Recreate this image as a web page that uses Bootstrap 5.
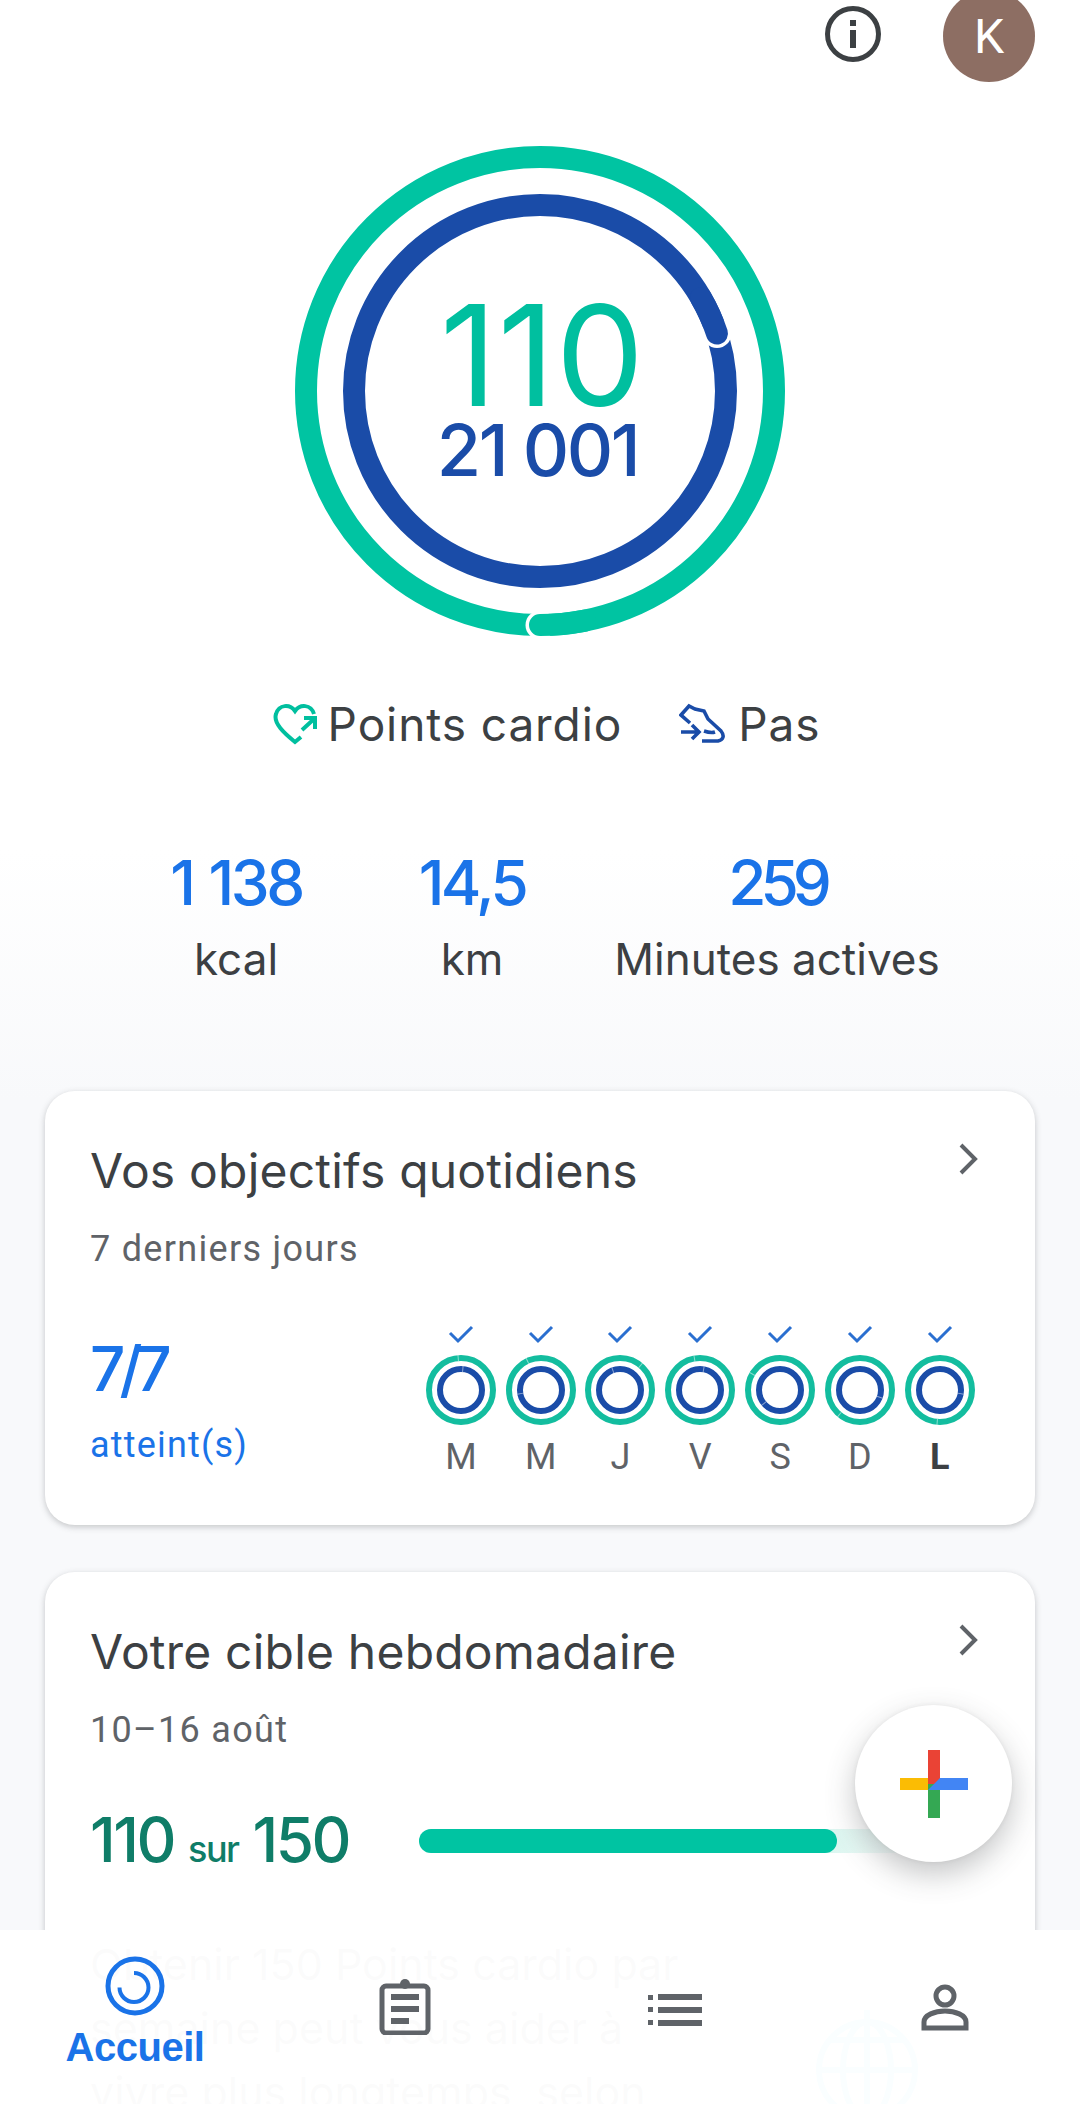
<!doctype html>
<html lang="fr">
<head>
<meta charset="utf-8" />
<meta name="viewport" content="width=device-width, initial-scale=1" />
<title>Fit</title>
<link href="https://cdn.jsdelivr.net/npm/bootstrap@5.3.6/dist/css/bootstrap.min.css" rel="stylesheet" crossorigin="anonymous" />
<style>
    html, body { height: 100%; }
    body {
        width: 1080px; height: 2104px; overflow: hidden; position: relative;
        font-family: Inter, sans-serif; color: #3c4043;
        background: linear-gradient(#fff 0, #fff 850px, #f8f9fb 1100px);
    }
    .top-bar { height: 82px; padding-right: 45px; gap: 62px; }
    .info-icon { margin-top: 6px; }
    .avatar { width: 92px; height: 92px; margin-top: -10px; background: #8d6e63; color: #fff; font: 400 48px Roboto, sans-serif; }
    .ring-box { width: 490px; height: 490px; margin: 64px auto 0; padding-top: 154px; }
    .ring-box svg { position: absolute; inset: 0; }
    .ring-num { position: relative; text-align: center; }
    .ring-main { font: 400 140px/110px Inter, sans-serif; letter-spacing: 1px; padding-left: 5px; color: #00bf9f; height: 110px; }
    .ring-sub { font: 500 72px/1 Inter, sans-serif; letter-spacing: -2.5px; padding-right: 5px; color: #1a4ca8; margin-top: 4px; }
    .legend { margin-top: 58px; margin-left: 13px; font-size: 46px; letter-spacing: .9px; line-height: 60px; gap: 57px; }
    .legend-item { gap: 11px; }
    .stats-row { margin-top: 97px; margin-left: 136px; }
    .stat-num { font: 500 62px/64px Inter, sans-serif; letter-spacing: -3.5px; word-spacing: 3px; color: #1a73e8; }
    .stat-txt { font-size: 44px; line-height: 60px; color: #3c4043; margin-top: 14px; }
    .s1, .s2 { width: 200px; }
    .s2 { margin-left: 36px; }
    .s3 { width: 360px; margin-left: 25px; }
    .s3 .stat-num { letter-spacing: -6px; }
    .fit-card { width: 990px; margin: 0 45px; background: #fff; border-radius: 30px; padding: 50px 45px 0; box-shadow: 0 2px 6px rgba(60,64,67,.28); position: relative; }
    .c1 { margin-top: 102px; height: 434px; }
    .c2 { margin-top: 47px; height: 532px; border-radius: 30px 30px 0 0; }
    .card-title-txt { font-size: 48px; line-height: 60px; letter-spacing: .2px; color: #3c4043; }
    .card-sub { font: 400 36px/44px Roboto, sans-serif; letter-spacing: 1.3px; color: #5f6368; margin-top: 26px; }
    .chev { position: absolute; right: 54px; top: 50px; }
    .goal-num { font: 500 62px/70px Inter, sans-serif; letter-spacing: -6px; color: #1a73e8; margin-top: 63px; }
    .goal-txt { font: 400 36px/44px Roboto, sans-serif; letter-spacing: 1.2px; color: #1a73e8; margin-top: 19px; }
    .days { position: absolute; left: 376px; top: 234px; }
    .day { width: 79.8px; text-align: center; }
    .day-ring { margin-top: 10px; }
    .day-name { font: 400 36px/40px Roboto, sans-serif; color: #5f6368; margin-top: 12px; }
    .day-now { font-weight: 700; color: #3c4043; }
    .target-line { margin-top: 53px; }
    .target-num { width: 329px; font: 500 62px/70px Inter, sans-serif; letter-spacing: -2.5px; color: #0f7d68; white-space: nowrap; }
    .target-num span { font-size: 36px; letter-spacing: -1.5px; }
    .bar-track { width: 500px; height: 24px; margin-top: -8px; border-radius: 12px; background: linear-gradient(90deg, #d6f5ee 0, #d6f5ee 400px, #fff 100%); }
    .bar-fill { width: 418px; height: 24px; border-radius: 12px; background: #00c4a2; }
    .card-desc { font-size: 43px; line-height: 64px; margin-top: 48px; width: 640px; }
    .who-logo { position: absolute; left: 757px; top: 438px; }
    .fab { position: absolute; left: 855px; top: 1705px; width: 157px; height: 157px; background: #fff; box-shadow: 0 12px 30px rgba(60,64,67,.3), 0 0 4px rgba(60,64,67,.08); z-index: 5; }
    .fab:hover { background: #fff; }
    .bottom-nav { position: absolute; left: 0; right: 0; top: 1930px; bottom: 0; background: rgba(255,255,255,.98); z-index: 4; }
    .nav-slot { flex: 0 0 270px; text-align: center; }
    .nav-home { padding-top: 26px; }
    .nav-plan { padding-top: 47px; }
    .nav-list { padding-top: 64px; }
    .nav-me { padding-top: 54px; }
    .nav-label { font: 700 40px/44px "Liberation Sans", sans-serif; color: #1a73e8; letter-spacing: -.5px; margin-top: 9px; }
</style>
</head>
<body>

<div class="top-bar d-flex justify-content-end align-items-start">
    <svg class="info-icon" width="56" height="56" viewBox="0 0 56 56"><circle cx="28" cy="28" r="25.5" fill="none" stroke="#3c4043" stroke-width="5"/><rect x="25" y="24" width="6" height="18" fill="#3c4043"/><rect x="25" y="14" width="6" height="6" fill="#3c4043"/></svg>
    <div class="avatar rounded-circle d-flex align-items-center justify-content-center">K</div>
</div>

<div class="ring-box position-relative">
    <svg width="490" height="490" viewBox="0 0 490 490" fill="none">
        <circle cx="245" cy="245" r="234" stroke="#00c4a2" stroke-width="22"/>
        <circle cx="245" cy="245" r="186" stroke="#1a4ca8" stroke-width="22"/>
        <!-- overlap of the ring ends -->
        <circle cx="245" cy="479" r="14.5" fill="#fff"/>
        <path d="M245 479A234 234 0 0 0 290 474.6" stroke="#00c4a2" stroke-width="22" stroke-linecap="round"/>
        <circle cx="422" cy="187.5" r="14.5" fill="#fff"/>
        <path d="M422 187.5A186 186 0 0 0 406 152" stroke="#1a4ca8" stroke-width="22" stroke-linecap="round"/>
    </svg>
    <div class="ring-num ring-main">110</div>
    <div class="ring-num ring-sub">21 001</div>
</div>

<div class="legend d-flex justify-content-center align-items-center">
    <div class="legend-item d-flex align-items-center">
        <svg width="44" height="42" viewBox="0 0 44 42" fill="none" stroke="#00bf9f" stroke-width="4"><path d="M41 11C38 1 27 1 22 8C17 1 6 1 3 11C0 20 11 30 22 39L28 34"/><path d="M29 27L41 16M31 15H42V26"/></svg>
        <span>Points cardio</span>
    </div>
    <div class="legend-item d-flex align-items-center">
        <svg width="48" height="42" viewBox="0 0 48 42" fill="none" stroke="#1a4ca8" stroke-width="3.6"><path d="M11 20L2 12L10 3L16 6L25 8L29 16L42 28C46 33 44 37 39 38H23"/><path d="M25 28C28 29 33 30 36 29"/><path d="M2 29H20M13 22L20 29L13 36"/></svg>
        <span>Pas</span>
    </div>
</div>

<div class="stats-row d-flex text-center">
    <div class="s1"><div class="stat-num">1 138</div><div class="stat-txt">kcal</div></div>
    <div class="s2"><div class="stat-num">14,5</div><div class="stat-txt">km</div></div>
    <div class="s3"><div class="stat-num">259</div><div class="stat-txt text-nowrap">Minutes actives</div></div>
</div>

<div class="fit-card c1">
    <div class="card-title-txt">Vos objectifs quotidiens</div>
    <div class="card-sub">7 derniers jours</div>
    <svg class="chev" width="24" height="36" viewBox="0 0 24 36" fill="none" stroke="#5f6368" stroke-width="4"><path d="M4 4L18 18L4 32"/></svg>
    <div class="goal-num">7/7</div>
    <div class="goal-txt">atteint(s)</div>
    <div class="days d-flex" id="days"></div>
</div>

<div class="fit-card c2">
    <div class="card-title-txt">Votre cible hebdomadaire</div>
    <div class="card-sub">10–16 août</div>
    <svg class="chev" width="24" height="36" viewBox="0 0 24 36" fill="none" stroke="#5f6368" stroke-width="4"><path d="M4 4L18 18L4 32"/></svg>
    <div class="target-line d-flex align-items-center">
        <div class="target-num">110 <span>sur</span> 150</div>
        <div class="bar-track"><div class="bar-fill"></div></div>
    </div>
    <div class="card-desc">Obtenir 150 Points cardio par semaine peut vous aider à vivre plus longtemps, selon</div>
    <svg class="who-logo" width="130" height="94" viewBox="0 0 130 94" fill="none" stroke="#00b4f0" stroke-width="6"><circle cx="65" cy="60" r="48"/><ellipse cx="65" cy="60" rx="24" ry="48"/><path d="M65 0V94M17 60H113M28 30H102"/></svg>
</div>

<button class="fab btn rounded-circle border-0 p-0 d-flex align-items-center justify-content-center" type="button">
    <svg width="68" height="68" viewBox="0 0 68 68">
        <rect x="0" y="28" width="34" height="12" fill="#fbbc04"/>
        <rect x="28" y="0" width="12" height="34" fill="#ea4335"/>
        <rect x="28" y="34" width="12" height="34" fill="#34a853"/>
        <path d="M34 34L40 28H68V40H28Z" fill="#4285f4"/>
    </svg>
</button>

<div class="bottom-nav d-flex">
    <div class="nav-slot nav-home">
        <svg class="d-block mx-auto" width="60" height="60" viewBox="0 0 60 60" fill="none" stroke="#1a73e8" stroke-width="5"><circle cx="30" cy="30" r="27"/><path d="M29 17A14.5 14.5 0 1 1 14.5 31.5" stroke-width="4"/></svg>
        <div class="nav-label">Accueil</div>
    </div>
    <div class="nav-slot nav-plan">
        <svg width="52" height="58" viewBox="0 0 52 58" fill="none" stroke="#5f6368" stroke-width="5"><rect x="3" y="9" width="46" height="47" rx="4"/><path d="M12 20H40M12 32H40M12 44H30" stroke-width="6"/><circle cx="26" cy="7" r="5" fill="#5f6368" stroke="none"/></svg>
    </div>
    <div class="nav-slot nav-list">
        <svg width="54" height="32" viewBox="0 0 54 32" fill="#5f6368"><rect x="0" y="1" width="5" height="5"/><rect x="0" y="13" width="5" height="5"/><rect x="0" y="26" width="5" height="5"/><rect x="10" y="0" width="44" height="6"/><rect x="10" y="13" width="44" height="6"/><rect x="10" y="26" width="44" height="6"/></svg>
    </div>
    <div class="nav-slot nav-me">
        <svg width="48" height="48" viewBox="0 0 48 48" fill="none" stroke="#5f6368" stroke-width="5"><circle cx="24" cy="12" r="9"/><path d="M3 44V38C3 31 14 27 24 27C34 27 45 31 45 38V44Z"/></svg>
    </div>
</div>

<script>
    // last seven days, each ring has its small white seam at a different angle
    const days = [
        { n: 'M', a: -5, b: 5 },
        { n: 'M', a: -25, b: -100 },
        { n: 'J', a: 40, b: -20 },
        { n: 'V', a: -10, b: 10 },
        { n: 'S', a: -60, b: -130 },
        { n: 'D', a: -140, b: 110 },
        { n: 'L', a: 185, b: 100 }
    ];
    function seam(angle, r) {
        return '<rect x="34.5" y="' + (35 - r - 3) + '" width="1" height="6" fill="#fff" opacity=".5" transform="rotate(' + angle + ' 35 35)"/>';
    }
    document.getElementById('days').innerHTML = days.map(function (d, i) {
        const cls = i === 6 ? 'day-name day-now' : 'day-name';
        return '<div class="day">' +
            '<svg width="26" height="20" viewBox="0 0 26 20" fill="none" stroke="#2a6fd0" stroke-width="3" class="d-block mx-auto"><path d="M2 8L10 16L24 2"/></svg>' +
            '<svg width="70" height="70" viewBox="0 0 70 70" fill="none" class="day-ring d-block mx-auto"><circle cx="35" cy="35" r="32" stroke="#13bd9f" stroke-width="6"/><circle cx="35" cy="35" r="21" stroke="#1a4ca8" stroke-width="6"/>' + seam(d.a, 32) + seam(d.b, 21) + '</svg>' +
            '<div class="' + cls + '">' + d.n + '</div></div>';
    }).join('');
</script>
<script src="https://cdn.jsdelivr.net/npm/bootstrap@5.3.6/dist/js/bootstrap.bundle.min.js" crossorigin="anonymous"></script>
</body>
</html>
